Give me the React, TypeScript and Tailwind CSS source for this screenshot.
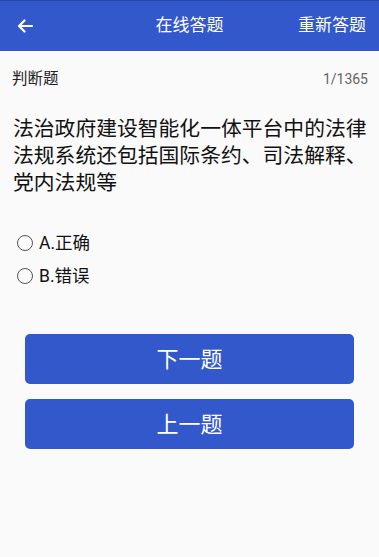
import React, { useState } from 'react';

const font = { fontFamily: '"Roboto", "Noto Sans CJK SC", sans-serif' };

export default function App() {
  const [answer, setAnswer] = useState<string | null>(null);
  const options = [
    { key: 'A', label: 'A.正确' },
    { key: 'B', label: 'B.错误' },
  ];

  return (
    <div className="w-[379px] h-[557px] bg-[#fafafa] flex flex-col" style={font}>
      {/* Header */}
      <div className="h-[51px] bg-[#3358cb] border-t border-[#2a47a8] flex items-center px-[17px] relative shrink-0">
        <svg width="16" height="14" viewBox="0 0 16 14" fill="none" stroke="white" strokeWidth="2.2" strokeLinecap="round" strokeLinejoin="round">
          <path d="M15 7H2M7.5 1.5L2 7l5.5 5.5" />
        </svg>
        <div className="absolute left-0 right-0 text-center text-white text-[17px] pointer-events-none">在线答题</div>
        <div className="ml-auto text-white text-[17px] mr-[-4px]">重新答题</div>
      </div>

      {/* Type row */}
      <div className="flex items-center justify-between pl-[12px] pr-[11px] pt-[17px]">
        <span className="text-[15.5px] text-[#222]">判断题</span>
        <span className="text-[14px] text-[#666]">1/1365</span>
      </div>

      {/* Question */}
      <div className="pl-[13px] pr-[11px] pt-[25px] text-[20.8px] leading-[27px] text-[#111]">
        法治政府建设智能化一体平台中的法律法规系统还包括国际条约、司法解释、党内法规等
      </div>

      {/* Options */}
      <div className="flex flex-col gap-[9px] pl-[17px] pt-[34px]">
        {options.map((o) => (
          <button key={o.key} onClick={() => setAnswer(o.key)} className="flex items-center gap-[6px] h-[24px] text-left">
            <span className="w-[16px] h-[16px] rounded-full border-[1.5px] border-[#555] flex items-center justify-center">
              {answer === o.key && <span className="w-[8px] h-[8px] rounded-full bg-[#3358cb]" />}
            </span>
            <span className="text-[17.5px] text-[#111]">{o.label}</span>
          </button>
        ))}
      </div>

      {/* Buttons */}
      <div className="flex flex-col gap-[15px] px-[25px] pt-[46px]">
        <button className="h-[50px] rounded-[5px] bg-[#3358cb] text-white text-[22px]">下一题</button>
        <button className="h-[50px] rounded-[5px] bg-[#3358cb] text-white text-[22px]">上一题</button>
      </div>
    </div>
  );
}
